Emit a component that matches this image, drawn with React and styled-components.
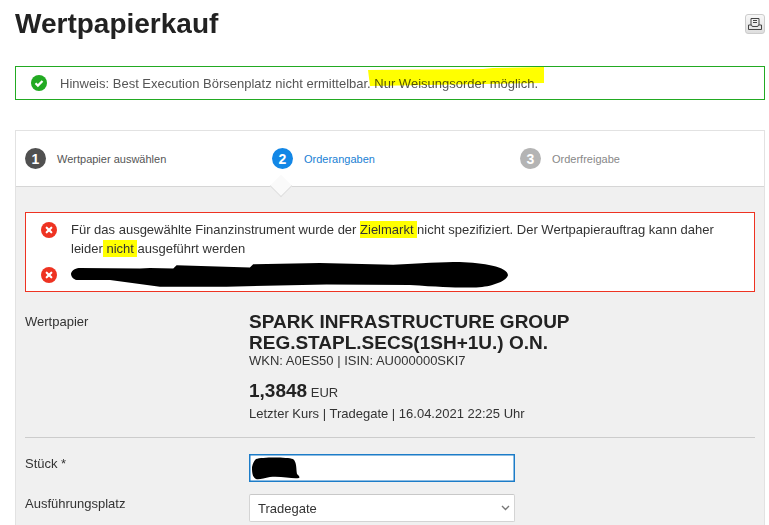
import React from 'react'
import styled, { createGlobalStyle } from 'styled-components'

const Global = createGlobalStyle`
  html, body { margin: 0; padding: 0; background: #fff; overflow: hidden; }
  body { font-family: "Liberation Sans", Arial, sans-serif; color: #333; }
`

const Page = styled.div`
  width: 769px;
  height: 525px;
  overflow: hidden;
  padding: 0 4px 0 15px;
  box-sizing: border-box;
`

const Head = styled.header`
  display: flex;
  justify-content: space-between;
  align-items: flex-start;
  height: 66px;
`

const Title = styled.h1`
  margin: 8px 0 0;
  font-size: 28px;
  line-height: 32px;
  font-weight: 700;
  color: #222;
`

const PrintButton = styled.button`
  width: 20px;
  height: 20px;
  margin-top: 14px;
  padding: 0;
  display: flex;
  align-items: center;
  justify-content: center;
  background: linear-gradient(#f8f8f8, #dedede);
  border: 1px solid #ccc;
  border-radius: 3px;
`

const Notice = styled.div`
  position: relative;
  display: flex;
  align-items: center;
  height: 34px;
  box-sizing: border-box;
  padding-left: 15px;
  gap: 13px;
  border: 1px solid #22aa22;
  font-size: 13px;
  color: #555;
`

/* yellow marker stroke lying over the notice text */
const Highlighter = styled.div`
  position: absolute;
  left: 352px;
  top: 0;
  width: 176px;
  height: 19px;
  background: #ffff00;
  mix-blend-mode: multiply;
  clip-path: polygon(0 3px, 115px 2px, 125px 1px, 100% 0, 100% 16px, 115px 17px, 60px 18px, 2px 100%);
`

/* black redaction strokes lying over the content */
const Scribble = styled.svg`
  position: absolute;
  left: ${p => p.$left}px;
  top: ${p => p.$top}px;
`

const Card = styled.section`
  margin-top: 30px;
  background: #f0f0f0;
  border: 1px solid #e2e2e2;
  border-bottom: 0;
`

const Steps = styled.ol`
  position: relative;
  display: grid;
  grid-template-columns: 247px 248px 1fr;
  height: 55px;
  margin: 0;
  padding: 0 0 0 9px;
  list-style: none;
  background: #fff;
  border-bottom: 1px solid #d6d6d6;

  &::after {
    content: '';
    position: absolute;
    left: 257px;
    bottom: -8px;
    width: 15px;
    height: 15px;
    background: #fafafa;
    border-right: 1px solid #ddd;
    border-bottom: 1px solid #ddd;
    transform: rotate(45deg);
  }
`

const Step = styled.li`
  display: flex;
  align-items: center;
  gap: 11px;
  font-size: 11px;
  color: ${p => p.$text};
`

const StepNumber = styled.span`
  width: 21px;
  height: 21px;
  border-radius: 50%;
  background: ${p => p.$bg};
  color: #fff;
  font-size: 14px;
  font-weight: 700;
  display: flex;
  align-items: center;
  justify-content: center;
`

const Body = styled.div`
  padding: 25px 9px 20px;
`

const ErrorBox = styled.div`
  position: relative;
  display: flex;
  flex-direction: column;
  height: 80px;
  box-sizing: border-box;
  padding: 7px 15px 0 15px;
  background: #fff;
  border: 1px solid #ee3322;
  font-size: 13px;
  line-height: 19px;
  color: #333;
`

const ErrorRow = styled.div`
  display: flex;
  gap: 14px;
  margin-bottom: 7px;
`

const ErrorIconWrap = styled.span`
  flex: none;
  height: 19px;
  display: flex;
  align-items: center;
`

const Mark = styled.mark`
  padding: 1px 0;
  background: #ffff00;
  color: inherit;
`

const Row = styled.div`
  display: grid;
  grid-template-columns: 224px 1fr;
  margin-top: ${p => p.$gap || 0}px;
  font-size: 13px;
`

const Label = styled.div`
  padding-top: ${p => p.$top || 0}px;
  color: #333;
`

const Name = styled.div`
  font-size: 19px;
  line-height: 21px;
  font-weight: 700;
  color: #222;
`

const Small = styled.div`
  margin-top: ${p => p.$gap || 0}px;
  font-size: 13px;
  line-height: 15px;
  color: #333;
`

const Price = styled.div`
  margin-top: 11px;
  font-size: 13px;
  line-height: 24px;
  color: #333;

  strong {
    font-size: 19px;
    color: #222;
  }
`

const Divider = styled.hr`
  margin: 16px 0;
  border: 0;
  border-top: 1px solid #ccc;
`

const FieldWrap = styled.div`
  position: relative;
  width: 266px;
`

const Input = styled.input`
  display: block;
  width: 100%;
  height: 28px;
  box-sizing: border-box;
  background: #fff;
  border: 1px solid #1c7cc8;
  box-shadow: inset 0 0 0 .5px #1c7cc8;
  outline: 0;
`

const Select = styled.select`
  display: block;
  appearance: none;
  width: 100%;
  height: 28px;
  box-sizing: border-box;
  padding: 0 8px;
  background: #fff;
  border: 1px solid #d4d4d4;
  border-top-color: #c8c8c8;
  border-radius: 2px;
  font-family: inherit;
  font-size: 13px;
  color: #333;
`

const Chevron = styled.svg`
  position: absolute;
  right: 5px;
  top: 11px;
  pointer-events: none;
`

const CheckIcon = () => (
  <svg width="16" height="16" viewBox="0 0 16 16">
    <circle cx="8" cy="8" r="8" fill="#22aa22" />
    <path d="M4.5 8.3l2.4 2.3 4.6-4.6" fill="none" stroke="#fff" strokeWidth="2.2" />
  </svg>
)

const ErrorIcon = () => (
  <svg width="16" height="16" viewBox="0 0 16 16">
    <circle cx="8" cy="8" r="8" fill="#ee3322" />
    <path d="M5.7 5.7l4.6 4.6M10.3 5.7l-4.6 4.6" fill="none" stroke="#fff" strokeWidth="2.2" strokeLinecap="round" />
  </svg>
)

const PrintIcon = () => (
  <svg width="14" height="12" viewBox="0 0 14 12" fill="none" stroke="#444" strokeWidth="1">
    <path d="M3 7V.5h8V7M5 2.5h4M5 4.5h4" />
    <path d="M.5 7v4.5h13V7h-3l-.7 1.5H4.2L3.5 7z" />
  </svg>
)

export default function App() {
  return (
    <Page>
      <Global />
      <Head>
        <Title>Wertpapierkauf</Title>
        <PrintButton aria-label="Drucken"><PrintIcon /></PrintButton>
      </Head>

      <Notice>
        <CheckIcon />
        <span>Hinweis: Best Execution Börsenplatz nicht ermittelbar. Nur Weisungsorder möglich.</span>
        <Highlighter />
      </Notice>

      <Card>
        <Steps>
          <Step $text="#555"><StepNumber $bg="#505050">1</StepNumber>Wertpapier auswählen</Step>
          <Step $text="#1a7fd4"><StepNumber $bg="#1387e6">2</StepNumber>Orderangaben</Step>
          <Step $text="#888"><StepNumber $bg="#b4b4b4">3</StepNumber>Orderfreigabe</Step>
        </Steps>

        <Body>
          <ErrorBox>
            <ErrorRow>
              <ErrorIconWrap><ErrorIcon /></ErrorIconWrap>
              <span>
                Für das ausgewählte Finanzinstrument wurde der <Mark>Zielmarkt </Mark>nicht spezifiziert. Der Wertpapierauftrag kann daher leider<Mark> nicht </Mark>ausgeführt werden
              </span>
            </ErrorRow>
            <ErrorRow>
              <ErrorIconWrap><ErrorIcon /></ErrorIconWrap>
            </ErrorRow>
            <Scribble $left={45} $top={49} width="438" height="27" viewBox="33 20 1315 82" preserveAspectRatio="none">
              <path d="M33 55C36 42 50 38 60 38L240 40 270 38 340 40 350 30 570 37 580 27 780 23 1000 28C1080 24 1150 20 1200 20 1270 22 1345 35 1345 60 1340 78 1310 85 1290 92 1250 100 1200 100 1050 90L800 88 500 95 300 95 150 75 50 75C40 72 33 65 33 55z" fill="#000" />
            </Scribble>
          </ErrorBox>

          <Row $gap={19}>
            <Label $top={3}>Wertpapier</Label>
            <div>
              <Name>SPARK INFRASTRUCTURE GROUP<br />REG.STAPL.SECS(1SH+1U.) O.N.</Name>
              <Small>WKN: A0ES50 | ISIN: AU000000SKI7</Small>
              <Price><strong>1,3848</strong> EUR</Price>
              <Small $gap={1}>Letzter Kurs | Tradegate | 16.04.2021 22:25 Uhr</Small>
            </div>
          </Row>

          <Divider />

          <Row>
            <Label $top={2}>Stück *</Label>
            <FieldWrap>
              <Input aria-label="Stück" />
              <Scribble $left={3} $top={3} width="48" height="23" viewBox="0 0 48 23">
                <path d="M4 2C10 0 35 0 41 2 45 5 44 12 45 17 47 19 48 20 47 21 40 22 30 19 18 20 12 21 7 23 4 22 0 20 0 14 0 10 1 6 2 4 4 2z" fill="#000" />
              </Scribble>
            </FieldWrap>
          </Row>
          <Row $gap={12}>
            <Label $top={2}>Ausführungsplatz</Label>
            <FieldWrap>
              <Select aria-label="Ausführungsplatz" defaultValue="Tradegate">
                <option>Tradegate</option>
              </Select>
              <Chevron width="9" height="6" viewBox="0 0 9 6" fill="none" stroke="#777" strokeWidth="1.4"><path d="M1 1l3.5 3.5L8 1" /></Chevron>
            </FieldWrap>
          </Row>
        </Body>
      </Card>
    </Page>
  )
}
